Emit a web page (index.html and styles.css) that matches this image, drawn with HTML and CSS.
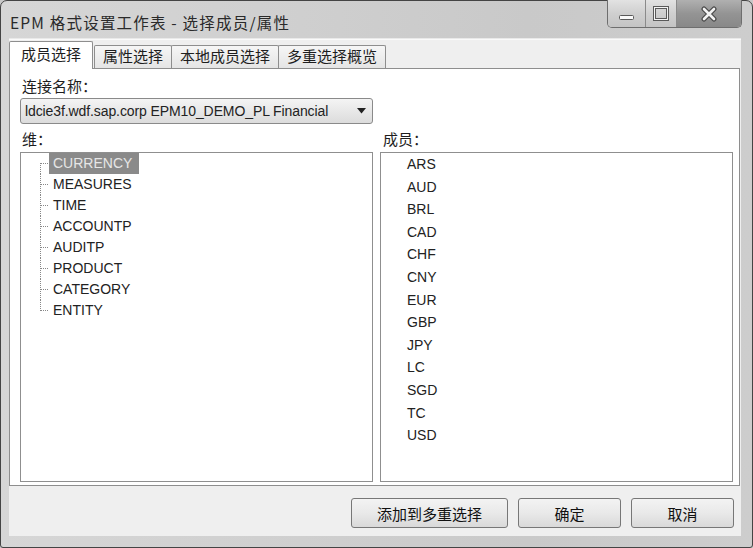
FILE: index.html
```html
<!DOCTYPE html>
<html lang="zh-CN">
<head>
  <meta charset="UTF-8">
  <title>EPM 格式设置工作表 - 选择成员/属性</title>
  <link rel="stylesheet" href="styles.css">
</head>
<body>
  <div class="window">

    <!-- Title bar -->
    <div class="titlebar">
      <div class="title">EPM 格式设置工作表 - 选择成员/属性</div>
      <div class="controls">
        <div class="ctl ctl-min">
          <svg width="18" height="8" viewBox="0 0 18 8"><rect x="1.5" y="2.5" width="14" height="4" rx="1" fill="#fafafa" stroke="#5a5a5a"/></svg>
        </div>
        <div class="ctl ctl-max">
          <svg width="18" height="16" viewBox="0 0 18 16"><rect x="2.5" y="1.5" width="13" height="12" fill="none" stroke="#5a5a5a" stroke-width="3"/><rect x="2.5" y="1.5" width="13" height="12" fill="none" stroke="#f4f4f4" stroke-width="1"/></svg>
        </div>
        <div class="ctl ctl-close">
          <svg width="18" height="16" viewBox="0 0 18 16"><path d="M4 3 L14 13 M14 3 L4 13" stroke="#4a4a4a" stroke-width="5" stroke-linecap="round"/><path d="M4 3 L14 13 M14 3 L4 13" stroke="#f2f2f2" stroke-width="2.6" stroke-linecap="round"/></svg>
        </div>
      </div>
    </div>

    <div class="client">
      <!-- Tabs -->
      <div class="tabs">
        <div class="tab active">成员选择</div>
        <div class="tab">属性选择</div>
        <div class="tab">本地成员选择</div>
        <div class="tab">多重选择概览</div>
      </div>

      <div class="panel">
        <label class="cap">连接名称：</label>
        <div class="combo">
          <span>ldcie3f.wdf.sap.corp EPM10_DEMO_PL Financial</span>
          <svg width="9" height="6" viewBox="0 0 9 6"><path d="M0 0 H9 L4.5 5.5 Z" fill="#222"/></svg>
        </div>

        <div class="lists">
          <label class="cap">维：</label>
          <label class="cap right-cap">成员：</label>

          <ul class="box tree">
            <li><span class="sel">CURRENCY</span></li>
            <li><span>MEASURES</span></li>
            <li><span>TIME</span></li>
            <li><span>ACCOUNTP</span></li>
            <li><span>AUDITP</span></li>
            <li><span>PRODUCT</span></li>
            <li><span>CATEGORY</span></li>
            <li><span>ENTITY</span></li>
          </ul>

          <ul class="box members">
            <li>ARS</li>
            <li>AUD</li>
            <li>BRL</li>
            <li>CAD</li>
            <li>CHF</li>
            <li>CNY</li>
            <li>EUR</li>
            <li>GBP</li>
            <li>JPY</li>
            <li>LC</li>
            <li>SGD</li>
            <li>TC</li>
            <li>USD</li>
          </ul>
        </div>
      </div>

      <!-- Buttons -->
      <div class="buttons">
        <button class="btn btn-wide">添加到多重选择</button>
        <button class="btn">确定</button>
        <button class="btn">取消</button>
      </div>
    </div>
  </div>
</body>
</html>
```

FILE: styles.css
```css
html, body {
  margin: 0;
  padding: 0;
  overflow: hidden;
}
body {
  font-family: "Liberation Sans", "Noto Sans CJK SC", sans-serif;
  color: #222;
  background: #c8c8c8;
}
* {
  box-sizing: border-box;
}

.window {
  width: 753px;
  height: 548px;
  display: flex;
  flex-direction: column;
  border: 1px solid #444;
  border-radius: 7px 7px 3px 3px;
  padding: 0 11px 11px 8px;
  background: linear-gradient(90deg, #d6d6d6 0%, #cfcfcf 40%, #c9c9c9 70%, #cdcdcd 100%);
}

/* title bar */
.titlebar {
  height: 37px;
  display: flex;
  align-items: flex-start;
}
.title {
  padding: 11px 0 0 1px;
  font-family: "Noto Sans CJK SC", sans-serif;
  font-size: 15.5px;
  line-height: 20px;
  color: #2a2a2a;
  letter-spacing: 1.2px;
}
.controls {
  margin-left: auto;
  margin-right: -1px;
  display: flex;
  height: 28px;
  margin-top: -1px;
  border: 1px solid #6e6e6e;
  border-top: none;
  border-radius: 0 0 5px 5px;
  overflow: hidden;
}
.ctl {
  display: flex;
  align-items: center;
  justify-content: center;
  background: linear-gradient(#e2e2e2, #cfcfcf 50%, #c4c4c4);
}
.ctl-min {
  width: 38px;
  border-right: 1px solid #8a8a8a;
  padding-top: 6px;
}
.ctl-max {
  width: 31px;
  border-right: 1px solid #8a8a8a;
}
.ctl-close {
  width: 64px;
  background: linear-gradient(#b0b0b0, #949494 50%, #888);
}

/* client */
.client {
  flex: 1;
  display: flex;
  flex-direction: column;
  background: #efefef;
  border-top: 1px solid #e9e9e9;
}
.tabs {
  height: 30px;
  display: flex;
  align-items: flex-end;
  padding-top: 3px;
  border-top: 1px solid #fafafa;
}
.tab {
  height: 24px;
  padding: 0 8px;
  margin-right: -1px;
  border: 1px solid #8e8e8e;
  border-bottom: none;
  border-radius: 2px 2px 0 0;
  background: linear-gradient(#f6f6f6, #e4e4e4);
  font-size: 15px;
  line-height: 22px;
  color: #1e1e1e;
}
.tab.active {
  height: 28px;
  padding: 2px 11px 0 11px;
  margin-right: 1px;
  background: #fff;
  position: relative;
  z-index: 1;
}

.panel {
  margin-top: -1px;
  background: #fff;
  border: 1px solid #8e8e8e;
  margin-right: 1px;
  padding: 8px 6px 3px 10px;
}
.cap {
  display: block;
  font-size: 15px;
  line-height: 20px;
  padding-left: 2px;
  color: #1e1e1e;
}
.combo {
  margin-top: 1px;
  width: 353px;
  height: 26px;
  display: flex;
  align-items: center;
  padding: 0 6px 0 4px;
  border: 1px solid #8a8a8a;
  border-radius: 3px;
  background: linear-gradient(#f4f4f4, #e8e8e8 50%, #dcdcdc);
  font-size: 14px;
  letter-spacing: -0.1px;
}
.combo span {
  flex: 1;
}

.lists {
  margin-top: 6px;
  display: grid;
  grid-template-columns: 353px 353px;
  column-gap: 7px;
}
.right-cap {
  padding-left: 3px;
}
.box {
  margin: 2px 0 0 0;
  height: 330px;
  list-style: none;
  border: 1px solid #8f8f8f;
  background: #fff;
  font-size: 14px;
}

/* dimension tree */
.tree {
  padding: 0;
}
.tree li {
  position: relative;
  height: 21px;
  line-height: 21px;
  padding-left: 28px;
}
.tree li::before {
  content: "";
  position: absolute;
  left: 19px;
  top: 10px;
  width: 8px;
  border-top: 1px dotted #888;
}
.tree li::after {
  content: "";
  position: absolute;
  left: 19px;
  top: 0;
  bottom: 0;
  border-left: 1px dotted #888;
}
.tree li:first-child::after {
  top: 10px;
}
.tree li:last-child::after {
  bottom: 10px;
}
.tree span {
  display: inline-block;
  padding: 0 7px 0 4px;
}
.tree .sel {
  background: #8a8a8a;
  color: #e6e6e6;
}

/* member list */
.members {
  padding: 0 0 0 26px;
}
.members li {
  height: 22.6px;
  line-height: 22.6px;
}

/* buttons */
.buttons {
  display: flex;
  justify-content: flex-end;
  gap: 10px;
  padding: 12px 7px 0 0;
}
.btn {
  width: 103px;
  height: 30px;
  border: 1px solid #777;
  border-radius: 3px;
  background: linear-gradient(#f3f3f3, #e9e9e9 50%, #d9d9d9);
  font-family: "Noto Sans CJK SC", sans-serif;
  font-size: 15px;
  color: #111;
  padding: 0;
}
.btn-wide {
  width: 157px;
}
```
